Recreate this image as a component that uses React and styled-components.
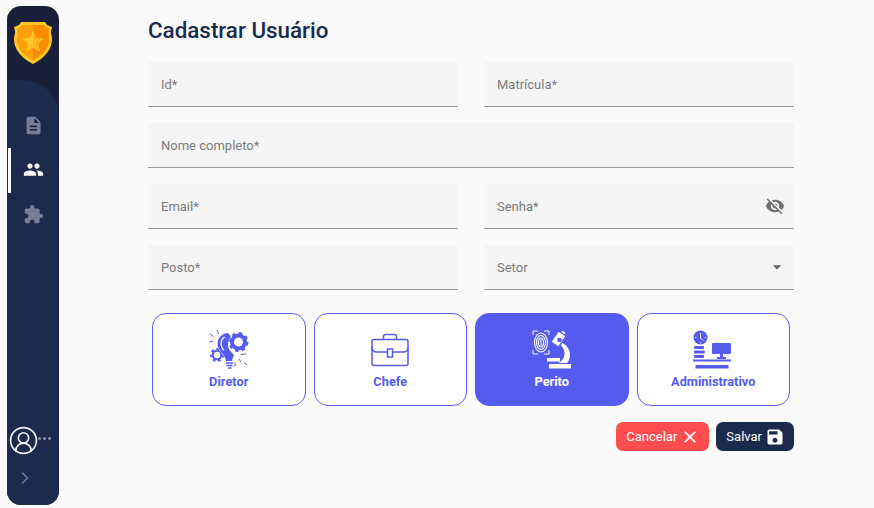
import styled, { createGlobalStyle } from 'styled-components';
import { MdDescription, MdPeople, MdExtension, MdVisibilityOff, MdSave, MdClose, MdArrowDropDown } from 'react-icons/md';
import { CircleUserRound, ChevronRight } from 'lucide-react';

const GlobalStyle = createGlobalStyle`
  html, body {
    margin: 0;
    padding: 0;
    height: 100%;
    background: #fafafa;
    font-family: Roboto, "Liberation Sans", sans-serif;
  }
  * { box-sizing: border-box; }
`;

const Page = styled.div`
  width: 874px;
  height: 508px;
  display: flex;
  padding: 6px 0 3px 7px;
  background: #fafafa;
  overflow: hidden;
`;

const Sidebar = styled.aside`
  width: 52px;
  flex-shrink: 0;
  display: flex;
  flex-direction: column;
  background: #1a2039;
  border-radius: 14px;
  overflow: hidden;
`;

const LogoArea = styled.div`
  height: 74px;
  flex-shrink: 0;
  display: flex;
  justify-content: center;
  padding: 15px 1px 0 0;
`;

const SideBody = styled.div`
  flex: 1;
  display: flex;
  flex-direction: column;
  background: #1c2a4d;
  border-top-right-radius: 36px;
`;

const NavList = styled.nav`
  display: flex;
  flex-direction: column;
  padding-top: 23px;
  flex: 1;
`;

const NavItem = styled.div`
  position: relative;
  height: 44.5px;
  display: flex;
  align-items: center;
  justify-content: center;
  color: ${(p) => (p.$active ? '#ffffff' : '#777d94')};
  ${(p) =>
    p.$active &&
    `&::before {
      content: '';
      position: absolute;
      left: 1px;
      top: 0;
      width: 3px;
      height: 45px;
      background: #ffffff;
    }`}
`;

const UserRow = styled.div`
  display: flex;
  align-items: center;
  height: 32px;
  padding-left: 1px;
  color: #eef0f4;
`;

const Dots = styled.span`
  display: flex;
  gap: 2px;
  margin: -4px 0 0 -1px;
  & > i {
    width: 3px;
    height: 3px;
    border-radius: 50%;
    background: #8b90a6;
  }
`;

const Expand = styled.div`
  height: 49px;
  display: flex;
  align-items: center;
  padding: 0 0 5px 8px;
  color: #6f7c9a;
`;

const Main = styled.main`
  width: 646px;
  margin-left: 89px;
  padding-top: 11px;
`;

const Title = styled.h1`
  margin: 0 0 18px;
  height: 27px;
  font-size: 22.4px;
  line-height: 27px;
  font-weight: 500;
  color: #1b2a4c;
`;

const FormGrid = styled.div`
  display: grid;
  grid-template-columns: 310px 310px;
  column-gap: 26px;
  row-gap: 16px;
`;

const Field = styled.div`
  height: 45px;
  display: flex;
  align-items: center;
  justify-content: space-between;
  padding: 0 9px 0 13px;
  background: #f5f5f5;
  border-bottom: 1px solid #9a9a9a;
  border-radius: 3px 3px 0 0;
  grid-column: ${(p) => (p.$wide ? '1 / span 2' : 'auto')};
`;

const FieldLabel = styled.span`
  font-size: 13px;
  color: #7b7b7b;
`;

const SelectArrow = styled(MdArrowDropDown)`
  margin-right: -2px;
  color: #666666;
`;

const RoleRow = styled.div`
  display: grid;
  grid-template-columns: repeat(4, 1fr);
  gap: 8px;
  margin: 23px 4px 0;
`;

const RoleCard = styled.button`
  height: 93px;
  padding: 0 0 16px;
  display: flex;
  flex-direction: column;
  align-items: center;
  justify-content: flex-end;
  gap: 4px;
  font-family: inherit;
  font-size: 12.8px;
  font-weight: 700;
  border-radius: 14px;
  border: 1px solid #5a5eee;
  background: ${(p) => (p.$selected ? '#545bee' : '#ffffff')};
  color: ${(p) => (p.$selected ? '#ffffff' : '#545bee')};
`;

const Actions = styled.div`
  display: flex;
  justify-content: flex-end;
  gap: 7px;
  margin-top: 16px;
`;

const ActionButton = styled.button`
  height: 29px;
  display: flex;
  align-items: center;
  gap: 3px;
  padding: 0 9px 0 10px;
  border: none;
  border-radius: 7px;
  font-family: inherit;
  font-size: 13px;
  color: #ffffff;
  background: ${(p) => (p.$danger ? '#ff4d4f' : '#1c2a4d')};
`;

const Shield = () => (
  <svg width="40" height="44" viewBox="0 0 40 44">
    <path d="M8 1h24l2 3 5 2-1 4c-.5 2 1 5 1 8 0 10-7 19-19 25C8 37 1 28 1 18c0-3 1.500-6 1-8L1 6l5-2z" fill="#ffc928" />
    <path d="M9 4h22l2 2.500 3 1.500-.5 3c-.5 2 .5 4 .5 7 0 9-6 16-16 21.500C10 34 4 27 4 18c0-3 1-5 .500-7L4 8l3-1.500z" fill="#ff9f0a" />
    <path d="M20 4h11l2 2.500 3 1.500-.5 3c-.5 2 .5 4 .5 7 0 9-6 16-16 21.500z" fill="#fb8c00" />
    <path d="M20 9.500l3.200 7.300 7.800.7-5.900 5.200 1.800 7.800L20 26.400l-6.900 4.100 1.800-7.800L9 17.500l7.800-.7z" fill="#ffc928" />
    <path d="M20 9.500l3.200 7.300 7.800.7-5.900 5.200 1.800 7.800L20 26.400z" fill="#ffb31f" />
  </svg>
);

const Gear = ({ cx, cy, r, hole, teeth, stroke }) => {
  const len = (2 * Math.PI * r) / (teeth * 2);
  return (
    <>
      <circle cx={cx} cy={cy} r={r} fill="none" stroke="currentColor" strokeWidth="3" strokeDasharray={`${len} ${len}`} />
      <circle cx={cx} cy={cy} r={(r + hole) / 2} fill="none" stroke="currentColor" strokeWidth={stroke} />
    </>
  );
};

const DirectorIcon = () => (
  <svg width="40" height="40" viewBox="0 0 40 40" fill="currentColor" stroke="none">
    <Gear cx={29.500} cy={12} r={8.500} hole={4.500} teeth={8} stroke={4} />
    <Gear cx={8} cy={25} r={5.500} hole={3} teeth={7} stroke={2} />
    <path d="M19 3c-6 .5-10.500 5-10.500 11 0 3.500 2 6 4 8.500 2 2.500 4 5 4.500 8.500h6c.5-2.500 1-4 2-6-3-3-6-6-6-10 0-3 1-6 3-8.500z" stroke="#fff" strokeWidth=".8" paintOrder="stroke" />
    <path d="M15.500 7c-2 1.500-3.500 4-3.500 7 0 2.500 1.500 4.500 3 6.500" fill="none" stroke="#fff" strokeWidth="1.200" />
    <path d="M17 33h7M17.500 35.500h6M19 38h3.500" fill="none" stroke="currentColor" strokeWidth="1.600" />
    <path d="M8 0l1.500 4M1 4l3.500 2.500M0 12l4-1M37 24l-5 .5M32 32l-2-3M38 35l-3-2.500M26 36.500v-4" fill="none" stroke="currentColor" strokeWidth="1" />
  </svg>
);

const BriefcaseIcon = () => (
  <svg width="40" height="40" viewBox="0 0 40 40" fill="none" stroke="currentColor" strokeWidth="1.500">
    <rect x="2" y="9.500" width="36" height="26" rx="2" />
    <path d="M2 17c0 3 2 5 5 5h10.500M22.500 22H33c3 0 5-2 5-5" />
    <rect x="17.500" y="19" width="5" height="8" />
    <path d="M13.500 9.500V6.500a2 2 0 0 1 2-2h9a2 2 0 0 1 2 2v3" />
  </svg>
);

const PeritoIcon = () => (
  <svg width="40" height="40" viewBox="0 0 40 40" fill="none" stroke="currentColor">
    <path d="M1 5V1h5M12 1h5v4M1 20v4h5M12 24h5v-4" strokeWidth="1" />
    <ellipse cx="9" cy="12.500" rx="6.500" ry="9.500" strokeWidth="1.100" />
    <ellipse cx="9" cy="12.500" rx="4.500" ry="7" strokeWidth="1.100" />
    <ellipse cx="9" cy="12.500" rx="2.500" ry="4.500" strokeWidth="1.100" />
    <path d="M9 9v7" strokeWidth="1" />
    <path d="M30 4l-7 10" strokeWidth="8" />
    <path d="M30 1.500l3 2" strokeWidth="2" />
    <circle cx="27.500" cy="10" r="2.300" fill="#545bee" stroke="none" />
    <path d="M30 13c5 2 8 6.500 8 12 0 3-1 6-3 8h-9c3-1.500 6.500-4 6.500-9.500 0-3-1-6-3.500-8z" fill="currentColor" stroke="none" />
    <rect x="15" y="28" width="13" height="3.500" fill="currentColor" stroke="none" />
    <rect x="17" y="34" width="22" height="4.500" fill="currentColor" stroke="none" />
  </svg>
);

const AdminIcon = () => (
  <svg width="40" height="40" viewBox="0 0 40 40" fill="currentColor">
    <circle cx="7.500" cy="7.500" r="7" />
    <path d="M7.500 3v5l2.500 2.500" fill="none" stroke="#fff" strokeWidth="1" />
    <path d="M2 7.500h1.500M11.500 7.500H13M7.500 12v1.500" fill="none" stroke="#fff" strokeWidth=".8" />
    <rect x="1" y="16" width="10" height="3" rx="1" />
    <rect x="1" y="20.500" width="11" height="3" rx="1" />
    <rect x="1" y="25" width="10" height="3" rx="1" />
    <rect x="19" y="13" width="19" height="11" rx="1" />
    <path d="M27 24h3v3h3v2h-9v-2h3z" />
    <rect x="0" y="29.500" width="38" height="2" />
    <rect x="2.500" y="35" width="33" height="3.500" />
  </svg>
);

const roles = [
  { name: 'Diretor', icon: <DirectorIcon /> },
  { name: 'Chefe', icon: <BriefcaseIcon /> },
  { name: 'Perito', icon: <PeritoIcon />, selected: true },
  { name: 'Administrativo', icon: <AdminIcon /> },
];

const App = () => (
  <>
    <GlobalStyle />
    <Page>
      <Sidebar>
        <LogoArea>
          <Shield />
        </LogoArea>
        <SideBody>
          <NavList>
            <NavItem><MdDescription size={21} /></NavItem>
            <NavItem $active><MdPeople size={21} /></NavItem>
            <NavItem><MdExtension size={21} /></NavItem>
          </NavList>
          <UserRow>
            <CircleUserRound size={31} strokeWidth={1.300} />
            <Dots><i /><i /><i /></Dots>
          </UserRow>
          <Expand><ChevronRight size={20} strokeWidth={2} /></Expand>
        </SideBody>
      </Sidebar>
      <Main>
        <Title>Cadastrar Usuário</Title>
        <FormGrid>
          <Field><FieldLabel>Id*</FieldLabel></Field>
          <Field><FieldLabel>Matrícula*</FieldLabel></Field>
          <Field $wide><FieldLabel>Nome completo*</FieldLabel></Field>
          <Field><FieldLabel>Email*</FieldLabel></Field>
          <Field>
            <FieldLabel>Senha*</FieldLabel>
            <MdVisibilityOff size={20} color="#707070" />
          </Field>
          <Field><FieldLabel>Posto*</FieldLabel></Field>
          <Field>
            <FieldLabel>Setor</FieldLabel>
            <SelectArrow size={20} />
          </Field>
        </FormGrid>
        <RoleRow>
          {roles.map((r) => (
            <RoleCard key={r.name} $selected={r.selected}>
              {r.icon}
              {r.name}
            </RoleCard>
          ))}
        </RoleRow>
        <Actions>
          <ActionButton $danger>Cancelar <MdClose size={20} /></ActionButton>
          <ActionButton>Salvar <MdSave size={20} /></ActionButton>
        </Actions>
      </Main>
    </Page>
  </>
);

export default App;
